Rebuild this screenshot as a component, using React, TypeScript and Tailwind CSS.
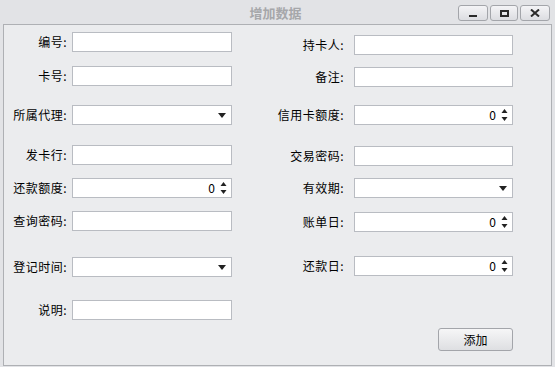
import React from 'react'

const font = { fontFamily: '"Noto Sans CJK SC", "Noto Sans", sans-serif' }

function TextBox({ w }: { w: string }) {
  return <div className={`${w} h-[20px] bg-white border border-[#b9bcc2]`} />
}

function Combo({ w }: { w: string }) {
  return (
    <div className={`${w} h-[20px] bg-white border border-[#b9bcc2] flex items-center justify-end pr-[5px]`}>
      <svg width="8" height="5" viewBox="0 0 8 5">
        <path d="M0 0h8L4 5z" fill="#222" />
      </svg>
    </div>
  )
}

function Spin({ w }: { w: string }) {
  return (
    <div className={`${w} h-[20px] bg-white border border-[#b9bcc2] flex items-center justify-end pr-[4px]`}>
      <span className="text-[12px] leading-none text-black mr-[5px]">0</span>
      <svg width="7" height="14" viewBox="0 0 7 14">
        <path d="M3.5 1L6.5 5H0.5z" fill="#222" />
        <path d="M0.5 9H6.5L3.5 13z" fill="#222" />
      </svg>
    </div>
  )
}

function Row({
  label,
  mt,
  labelW,
  gap,
  children,
}: {
  label: string
  mt: string
  labelW: string
  gap: string
  children: React.ReactNode
}) {
  return (
    <div className={`flex items-center ${mt}`}>
      <div className={`${labelW} ${gap} text-right text-[12px] leading-none text-black whitespace-nowrap tracking-[0.5px]`}>{label}</div>
      {children}
    </div>
  )
}

function TitleButton({ w, children }: { w: string; children: React.ReactNode }) {
  return (
    <div
      className={`${w} h-[16px] rounded-[3px] border border-[#a3a5aa] bg-gradient-to-b from-[#f4f4f6] to-[#dcdde1] flex items-center justify-center`}
    >
      {children}
    </div>
  )
}

export default function App() {
  return (
    <div className="w-[555px] h-[367px] bg-[#e2e3e6] flex flex-col overflow-hidden" style={font}>
      {/* title bar */}
      <div className="h-[24px] grid grid-cols-[1fr_auto_1fr] items-center">
        <div />
        <div className="text-[13px] font-bold text-[#a6a7aa] leading-none pr-[4px]">增加数据</div>
        <div className="flex justify-end gap-[2px] pr-[5px] self-start pt-[5px]">
          <TitleButton w="w-[30px]">
            <div className="w-[8px] h-[2px] bg-[#2a2a2a] mt-[5px]" />
          </TitleButton>
          <TitleButton w="w-[28px]">
            <div className="w-[9px] h-[7px] border-2 border-[#2a2a2a]" />
          </TitleButton>
          <TitleButton w="w-[30px]">
            <svg width="10" height="8" viewBox="0 0 10 8">
              <path d="M1 0.5L9 7.5M9 0.5L1 7.5" stroke="#2a2a2a" strokeWidth="2" />
            </svg>
          </TitleButton>
        </div>
      </div>

      {/* client area */}
      <div className="flex-1 mx-[3px] mb-[1px] border border-[#aeb0b4] bg-[#ebecee] flex">
        {/* left column */}
        <div className="flex flex-col">
          <Row label="编号:" mt="mt-[7px]" labelW="w-[63px]" gap="mr-[5px]"><TextBox w="w-[160px]" /></Row>
          <Row label="卡号:" mt="mt-[14px]" labelW="w-[63px]" gap="mr-[5px]"><TextBox w="w-[160px]" /></Row>
          <Row label="所属代理:" mt="mt-[19px]" labelW="w-[63px]" gap="mr-[5px]"><Combo w="w-[160px]" /></Row>
          <Row label="发卡行:" mt="mt-[20px]" labelW="w-[63px]" gap="mr-[5px]"><TextBox w="w-[160px]" /></Row>
          <Row label="还款额度:" mt="mt-[13px]" labelW="w-[63px]" gap="mr-[5px]"><Spin w="w-[160px]" /></Row>
          <Row label="查询密码:" mt="mt-[13px]" labelW="w-[63px]" gap="mr-[5px]"><TextBox w="w-[160px]" /></Row>
          <Row label="登记时间:" mt="mt-[26px]" labelW="w-[63px]" gap="mr-[5px]"><Combo w="w-[160px]" /></Row>
          <Row label="说明:" mt="mt-[23px]" labelW="w-[63px]" gap="mr-[5px]"><TextBox w="w-[160px]" /></Row>
        </div>

        {/* right column */}
        <div className="flex flex-col ml-[12px]">
          <Row label="持卡人:" mt="mt-[10px]" labelW="w-[100px]" gap="mr-[10px]"><TextBox w="w-[159px]" /></Row>
          <Row label="备注:" mt="mt-[12px]" labelW="w-[100px]" gap="mr-[10px]"><TextBox w="w-[159px]" /></Row>
          <Row label="信用卡额度:" mt="mt-[18px]" labelW="w-[100px]" gap="mr-[10px]"><Spin w="w-[159px]" /></Row>
          <Row label="交易密码:" mt="mt-[21px]" labelW="w-[100px]" gap="mr-[10px]"><TextBox w="w-[159px]" /></Row>
          <Row label="有效期:" mt="mt-[12px]" labelW="w-[100px]" gap="mr-[10px]"><Combo w="w-[159px]" /></Row>
          <Row label="账单日:" mt="mt-[14px]" labelW="w-[100px]" gap="mr-[10px]"><Spin w="w-[159px]" /></Row>
          <Row label="还款日:" mt="mt-[24px]" labelW="w-[100px]" gap="mr-[10px]"><Spin w="w-[159px]" /></Row>
          <div className="flex justify-end mt-[52px]">
            <button className="w-[75px] h-[23px] rounded-[3px] border border-[#a3a5aa] bg-gradient-to-b from-[#f6f6f7] to-[#dedfe2] text-[12px] leading-none text-black">
              添加
            </button>
          </div>
        </div>
      </div>
    </div>
  )
}
